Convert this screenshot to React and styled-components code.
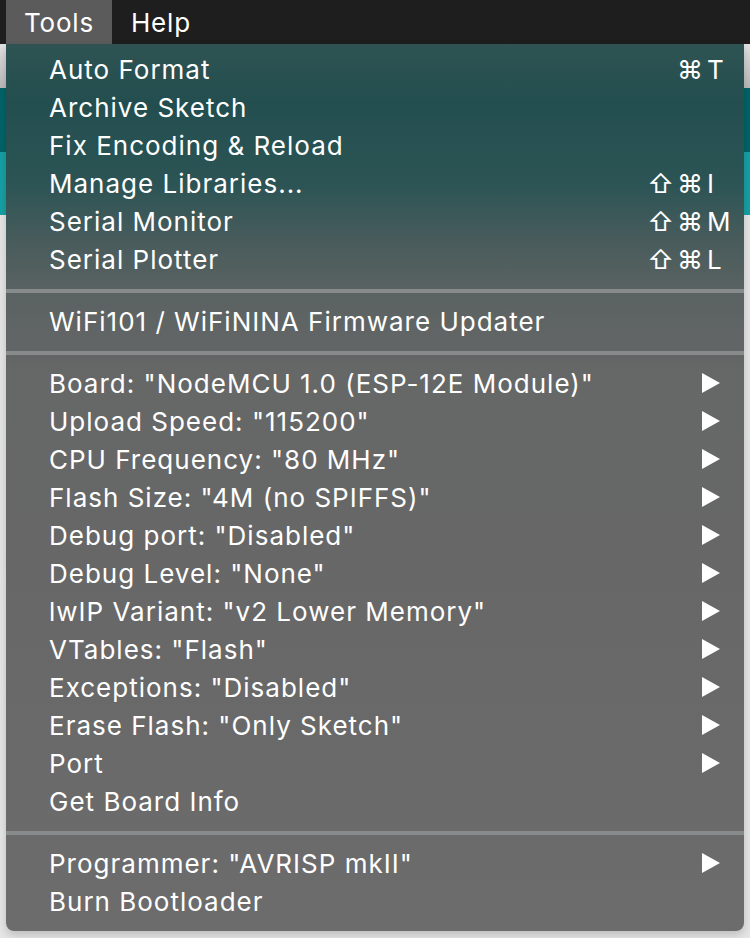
import React from "react";
import styled, { createGlobalStyle } from "styled-components";

const Global = createGlobalStyle`
  html, body { margin: 0; padding: 0; width: 750px; height: 938px; overflow: hidden; }
  body { font-family: Inter, "Liberation Sans", sans-serif; background: #e6e6e6; }
  #root { width: 750px; height: 938px; }
`;

const Screen = styled.div`
  position: relative;
  width: 750px;
  height: 938px;
  display: flex;
  flex-direction: column;
  background: #e6e6e6;
`;

const MenuBar = styled.div`
  height: 44px;
  flex: none;
  background: #1e1e1e;
  display: flex;
  align-items: stretch;
  padding-left: 6px;
`;

const MenuTitle = styled.div`
  display: flex;
  align-items: center;
  justify-content: ${(p) => (p.$active ? "center" : "flex-start")};
  padding: 0 ${(p) => (p.$active ? "0" : "19px")};
  color: #fff;
  font-size: 26px;
  letter-spacing: 0.8px;
  background: ${(p) => (p.$active ? "#5b5b5b" : "transparent")};
  width: ${(p) => (p.$active ? "106px" : "auto")};
`;

const Toolbar = styled.div`
  height: 44px;
  flex: none;
  background: linear-gradient(#e2e2e2, #b9b9b9);
`;

const TealBar = styled.div`
  height: 64px;
  flex: none;
  background: #006468;
`;

const TabBar = styled.div`
  height: 63px;
  flex: none;
  background: #17a1a5;
`;

const Editor = styled.div`
  flex: 1;
  background: #e6e6e6;
`;

const Dropdown = styled.div`
  position: absolute;
  left: 6px;
  top: 44px;
  width: 738px;
  padding: 6px 0 11px;
  border-radius: 0 0 8px 8px;
  background: linear-gradient(
    180deg,
    #2f5353 0px,
    #234e4f 60px,
    #2c5455 140px,
    #4a5c5c 200px,
    #5b6262 250px,
    #666767 330px,
    #676767 500px,
    #6c6c6c 880px
  );
  box-shadow: 0 4px 10px rgba(0, 0, 0, 0.18);
  color: #fff;
  font-size: 26px;
  letter-spacing: 1px;
`;

const Item = styled.div`
  height: 38px;
  display: flex;
  align-items: center;
  padding-left: 43px;
  padding-right: 24px;
  white-space: nowrap;
`;

const Label = styled.span`
  flex: 1;
`;

const Shortcut = styled.span`
  display: flex;
  align-items: center;
`;

const Mods = styled.span`
  text-align: right;
  letter-spacing: 3px;
`;

const Key = styled.span`
  width: 13px;
  margin-left: 1px;
  text-align: left;
  letter-spacing: 0;
`;

const Separator = styled.div`
  height: 4px;
  margin: 11px 0 9px;
  background: #878b8b;
`;

const Arrow = styled.svg`
  width: 18px;
  height: 20px;
  display: block;
`;

const SubArrow = () => (
  <Arrow viewBox="0 0 18 20">
    <polygon points="0,0 18,10 0,20" fill="#fff" />
  </Arrow>
);

const KeyShortcut = ({ mods, k }) => (
  <Shortcut>
    <Mods>{mods}</Mods>
    <Key>{k}</Key>
  </Shortcut>
);

const groups = [
  [
    { label: "Auto Format", mods: "⌘", k: "T" },
    { label: "Archive Sketch" },
    { label: "Fix Encoding & Reload" },
    { label: "Manage Libraries...", mods: "⇧⌘", k: "I" },
    { label: "Serial Monitor", mods: "⇧⌘", k: "M" },
    { label: "Serial Plotter", mods: "⇧⌘", k: "L" },
  ],
  [{ label: "WiFi101 / WiFiNINA Firmware Updater" }],
  [
    { label: 'Board: "NodeMCU 1.0 (ESP-12E Module)"', sub: true },
    { label: 'Upload Speed: "115200"', sub: true },
    { label: 'CPU Frequency: "80 MHz"', sub: true },
    { label: 'Flash Size: "4M (no SPIFFS)"', sub: true },
    { label: 'Debug port: "Disabled"', sub: true },
    { label: 'Debug Level: "None"', sub: true },
    { label: 'lwIP Variant: "v2 Lower Memory"', sub: true },
    { label: 'VTables: "Flash"', sub: true },
    { label: 'Exceptions: "Disabled"', sub: true },
    { label: 'Erase Flash: "Only Sketch"', sub: true },
    { label: "Port", sub: true },
    { label: "Get Board Info" },
  ],
  [
    { label: 'Programmer: "AVRISP mkII"', sub: true },
    { label: "Burn Bootloader" },
  ],
];

export default function App() {
  return (
    <>
      <Global />
      <Screen>
        <MenuBar>
          <MenuTitle $active>Tools</MenuTitle>
          <MenuTitle>Help</MenuTitle>
        </MenuBar>
        <Toolbar />
        <TealBar />
        <TabBar />
        <Editor />
        <Dropdown>
          {groups.map((g, gi) => (
            <React.Fragment key={gi}>
              {gi > 0 && <Separator />}
              {g.map((it) => (
                <Item key={it.label}>
                  <Label>{it.label}</Label>
                  {it.k && <KeyShortcut mods={it.mods} k={it.k} />}
                  {it.sub && <SubArrow />}
                </Item>
              ))}
            </React.Fragment>
          ))}
        </Dropdown>
      </Screen>
    </>
  );
}
